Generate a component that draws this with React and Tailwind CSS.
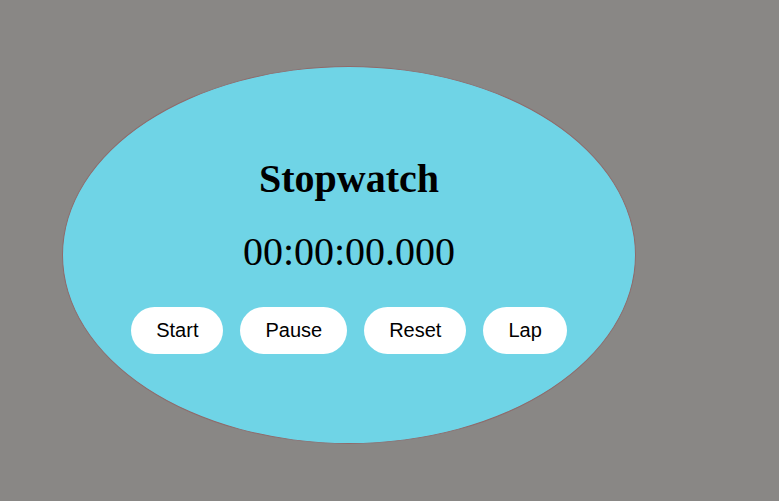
import React, { useState, useEffect, useRef } from 'react';

const pad = (n, len = 2) => String(n).padStart(len, '0');

const formatTime = (ms) => {
  const h = Math.floor(ms / 3600000);
  const m = Math.floor((ms % 3600000) / 60000);
  const s = Math.floor((ms % 60000) / 1000);
  return `${pad(h)}:${pad(m)}:${pad(s)}.${pad(ms % 1000, 3)}`;
};

const App = () => {
  const [elapsed, setElapsed] = useState(0);
  const [running, setRunning] = useState(false);
  const [laps, setLaps] = useState([]);
  const startRef = useRef(0);

  useEffect(() => {
    if (!running) return;
    startRef.current = Date.now() - elapsed;
    const id = setInterval(() => setElapsed(Date.now() - startRef.current), 10);
    return () => clearInterval(id);
  }, [running]);

  const buttons = [
    { label: 'Start', onClick: () => setRunning(true) },
    { label: 'Pause', onClick: () => setRunning(false) },
    {
      label: 'Reset',
      onClick: () => {
        setRunning(false);
        setElapsed(0);
        setLaps([]);
      },
    },
    { label: 'Lap', onClick: () => setLaps((l) => [...l, elapsed]) },
  ];

  return (
    <div className="min-h-screen bg-[#898785] pt-[66px] pl-[62px]">
      {/* Ellipse body */}
      <div className="w-[574px] h-[378px] rounded-[50%] bg-[#6fd4e6] border border-[#8f6a6a] flex flex-col items-center justify-center">
        <h1 className="font-['Liberation_Serif',serif] font-bold text-[40px] leading-[46px] text-black">
          Stopwatch
        </h1>
        <div className="mt-[27px] font-['Liberation_Serif',serif] text-[40px] leading-[46px] text-black">
          {formatTime(elapsed)}
        </div>
        <div className="mt-[32px] flex gap-[17px]">
          {buttons.map((b) => (
            <button
              key={b.label}
              onClick={b.onClick}
              className="h-[47px] px-[25px] rounded-full bg-white font-['Liberation_Sans',Arial,sans-serif] text-[20px] leading-[23px] text-black cursor-pointer"
            >
              {b.label}
            </button>
          ))}
        </div>
      </div>
    </div>
  );
};

export default App;
